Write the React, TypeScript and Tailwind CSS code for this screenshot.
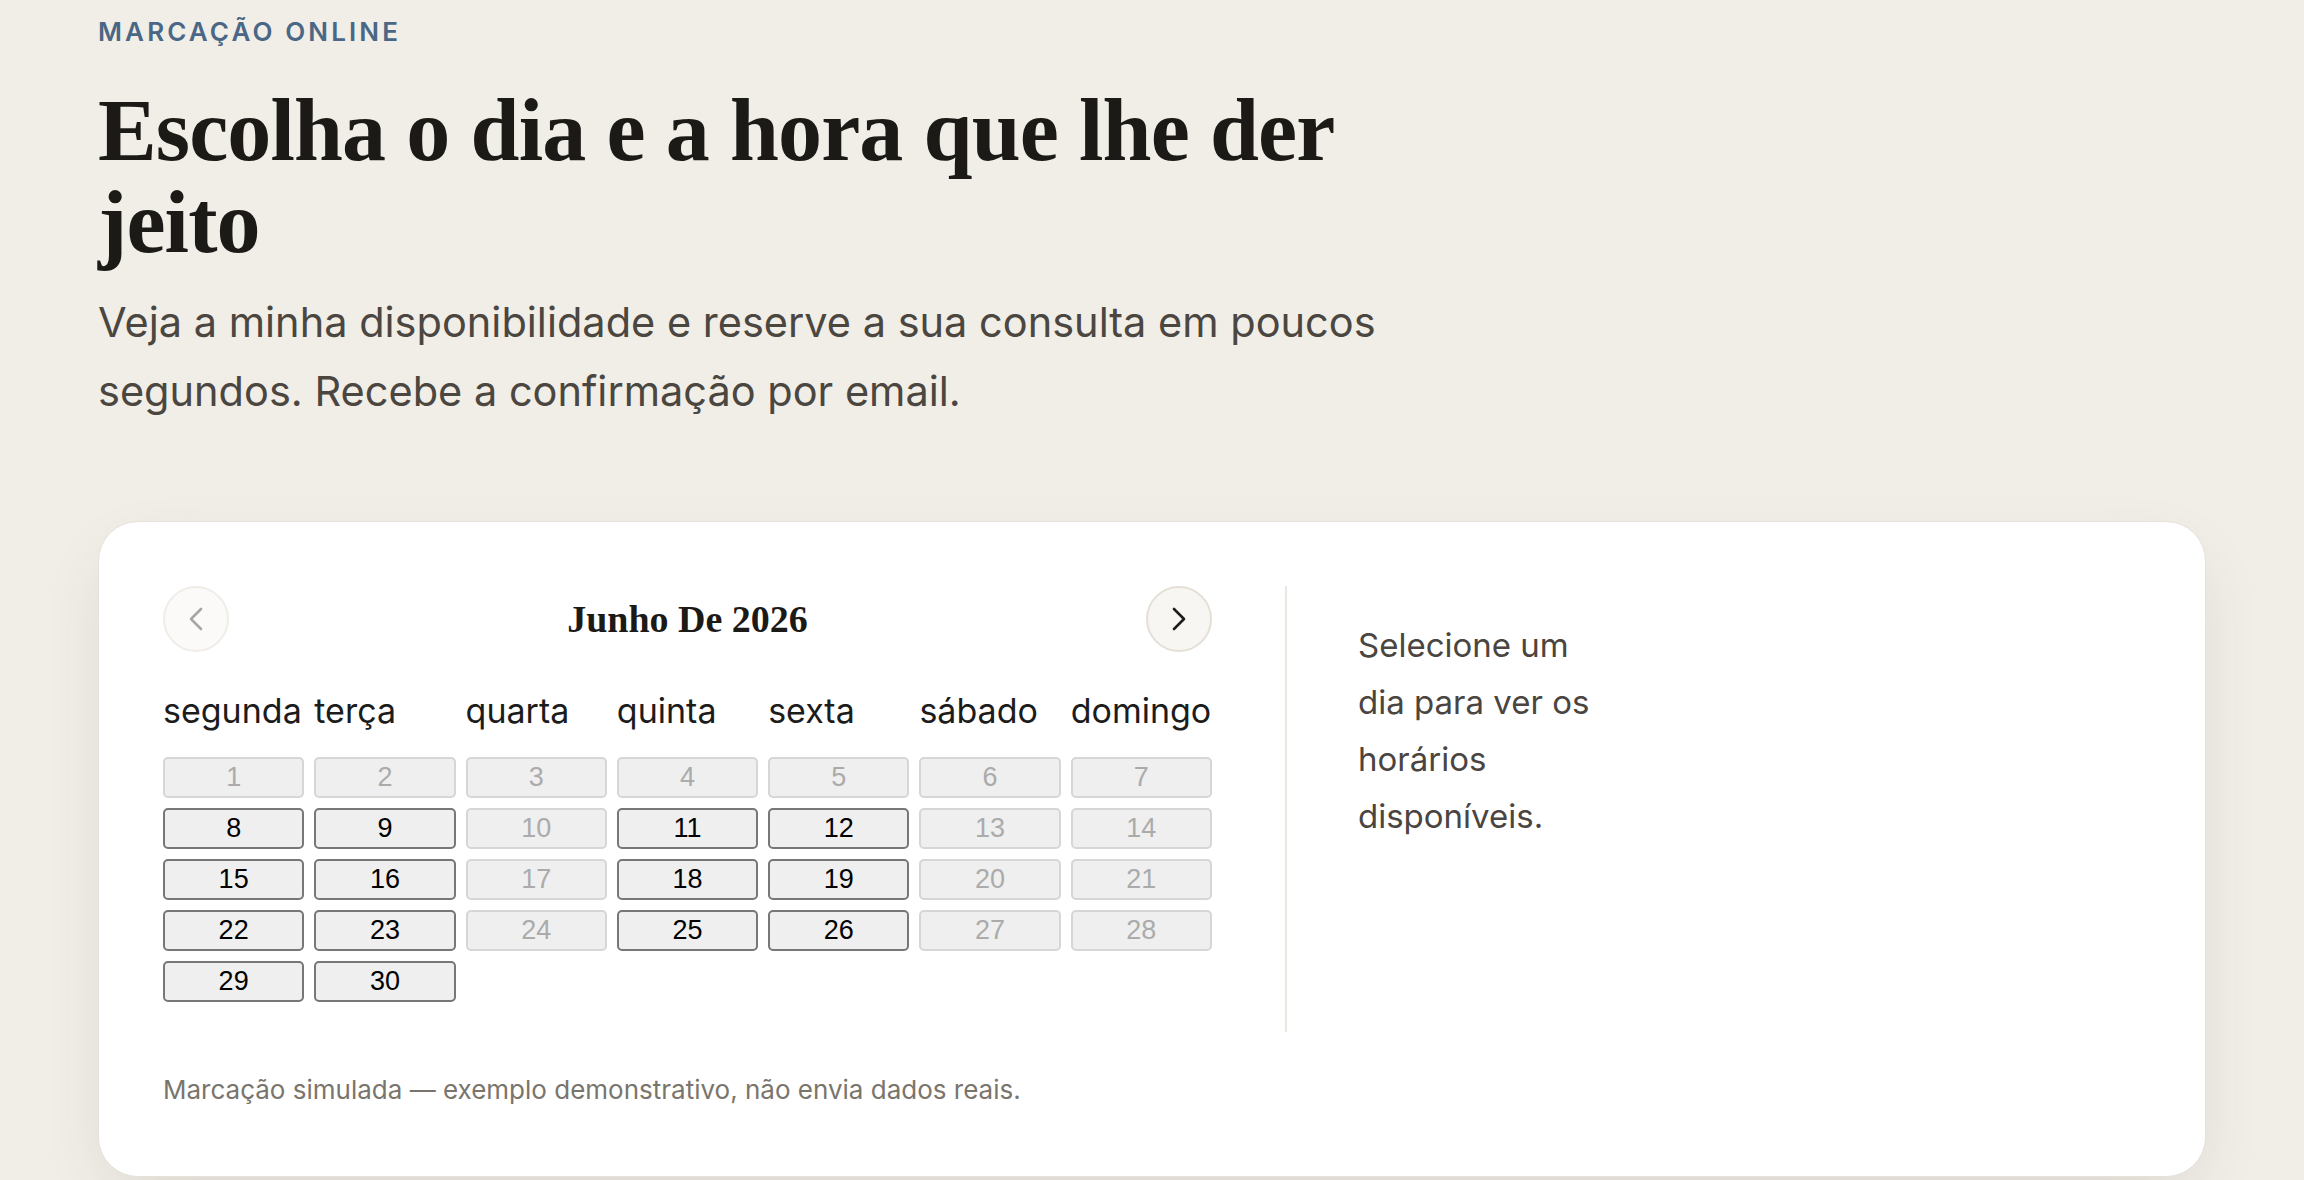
const weekdays = ['segunda', 'terça', 'quarta', 'quinta', 'sexta', 'sábado', 'domingo']

// days open for booking in June 2026 (mon, tue, thu, fri from the 8th)
const open = new Set([8, 9, 11, 12, 15, 16, 18, 19, 22, 23, 25, 26, 29, 30])

function Chevron({ dir, color }: { dir: 'left' | 'right'; color: string }) {
  return (
    <svg width="14" height="24" viewBox="0 0 14 24" fill="none">
      <path
        d={dir === 'left' ? 'M12 2 L2 12 L12 22' : 'M2 2 L12 12 L2 22'}
        stroke={color}
        strokeWidth="2.6"
        strokeLinecap="round"
        strokeLinejoin="round"
      />
    </svg>
  )
}

function DayCell({ day }: { day: number }) {
  const enabled = open.has(day)
  return (
    <button
      disabled={!enabled}
      className={
        enabled
          ? 'h-[41px] rounded-[5px] border-2 border-[#777777] bg-[#efefef] text-[27px] leading-none text-black'
          : 'h-[41px] rounded-[5px] border-2 border-[#d6d6d6] bg-[#efefef] text-[27px] leading-none text-[#ababab]'
      }
      style={{ fontFamily: '"Liberation Sans", Arial, sans-serif' }}
    >
      {day}
    </button>
  )
}

export default function App() {
  const days = Array.from({ length: 30 }, (_, i) => i + 1)

  return (
    <div
      className="min-h-screen bg-[#f1eee8] px-[98px] pt-[12px] pb-10"
      style={{ fontFamily: 'Inter, "Noto Sans", sans-serif' }}
    >
      <div className="max-w-[1400px]">
        <p className="text-[26px] leading-[39px] font-semibold tracking-[0.12em] text-[#4a6785]">
          MARCAÇÃO ONLINE
        </p>
        <h1
          className="mt-[34px] text-[88px] leading-[92px] font-bold tracking-[-0.01em] text-[#1c1a17]"
          style={{ fontFamily: '"Liberation Serif", "Times New Roman", serif' }}
        >
          Escolha o dia e a hora que lhe der jeito
        </h1>
        <p className="mt-[19px] text-[41.5px] leading-[69px] text-[#4b4640]">
          Veja a minha disponibilidade e reserve a sua consulta em poucos segundos. Recebe a
          confirmação por email.
        </p>
      </div>

      <div className="mt-[95px] rounded-[40px] border border-[#e7e2d9] bg-white px-16 pt-16 pb-[68px] shadow-[0_24px_70px_-18px_rgba(70,55,30,0.16)]">
        <div className="flex">
          <div className="w-[1049px] shrink-0 pb-[30px]">
            <div className="flex h-[66px] items-center justify-between">
              <button
                disabled
                className="grid size-[66px] place-items-center rounded-full border-2 border-[#f0ede8] bg-[#fbfaf8]"
                aria-label="Mês anterior"
              >
                <Chevron dir="left" color="#a6a6a6" />
              </button>
              <h2
                className="text-[38px] font-bold text-[#1c1a17]"
                style={{ fontFamily: '"Liberation Serif", "Times New Roman", serif' }}
              >
                Junho De 2026
              </h2>
              <button
                className="grid size-[66px] place-items-center rounded-full border-2 border-[#e5e0d7] bg-[#f8f6f2]"
                aria-label="Mês seguinte"
              >
                <Chevron dir="right" color="#1d1d1d" />
              </button>
            </div>

            <div className="mt-[37px] grid grid-cols-7 gap-x-[10px] text-[34px] leading-[44px] text-[#1c1c1c]">
              {weekdays.map((w) => (
                <div key={w} className="whitespace-nowrap">{w}</div>
              ))}
            </div>

            <div className="mt-[24px] grid grid-cols-7 gap-x-[10px] gap-y-[10px]">
              {days.map((d) => (
                <DayCell key={d} day={d} />
              ))}
            </div>
          </div>

          <div className="ml-[73px] border-l-2 border-[#ebe7e0] pl-[71px] pt-[31px]">
            <p className="w-[250px] text-[33px] leading-[57px] text-[#4a4540]">
              Selecione um dia para ver os horários disponíveis.
            </p>
          </div>
        </div>

        <p className="mt-[40px] text-[26px] leading-[36px] text-[#7a756c]">
          Marcação simulada — exemplo demonstrativo, não envia dados reais.
        </p>
      </div>
    </div>
  )
}
